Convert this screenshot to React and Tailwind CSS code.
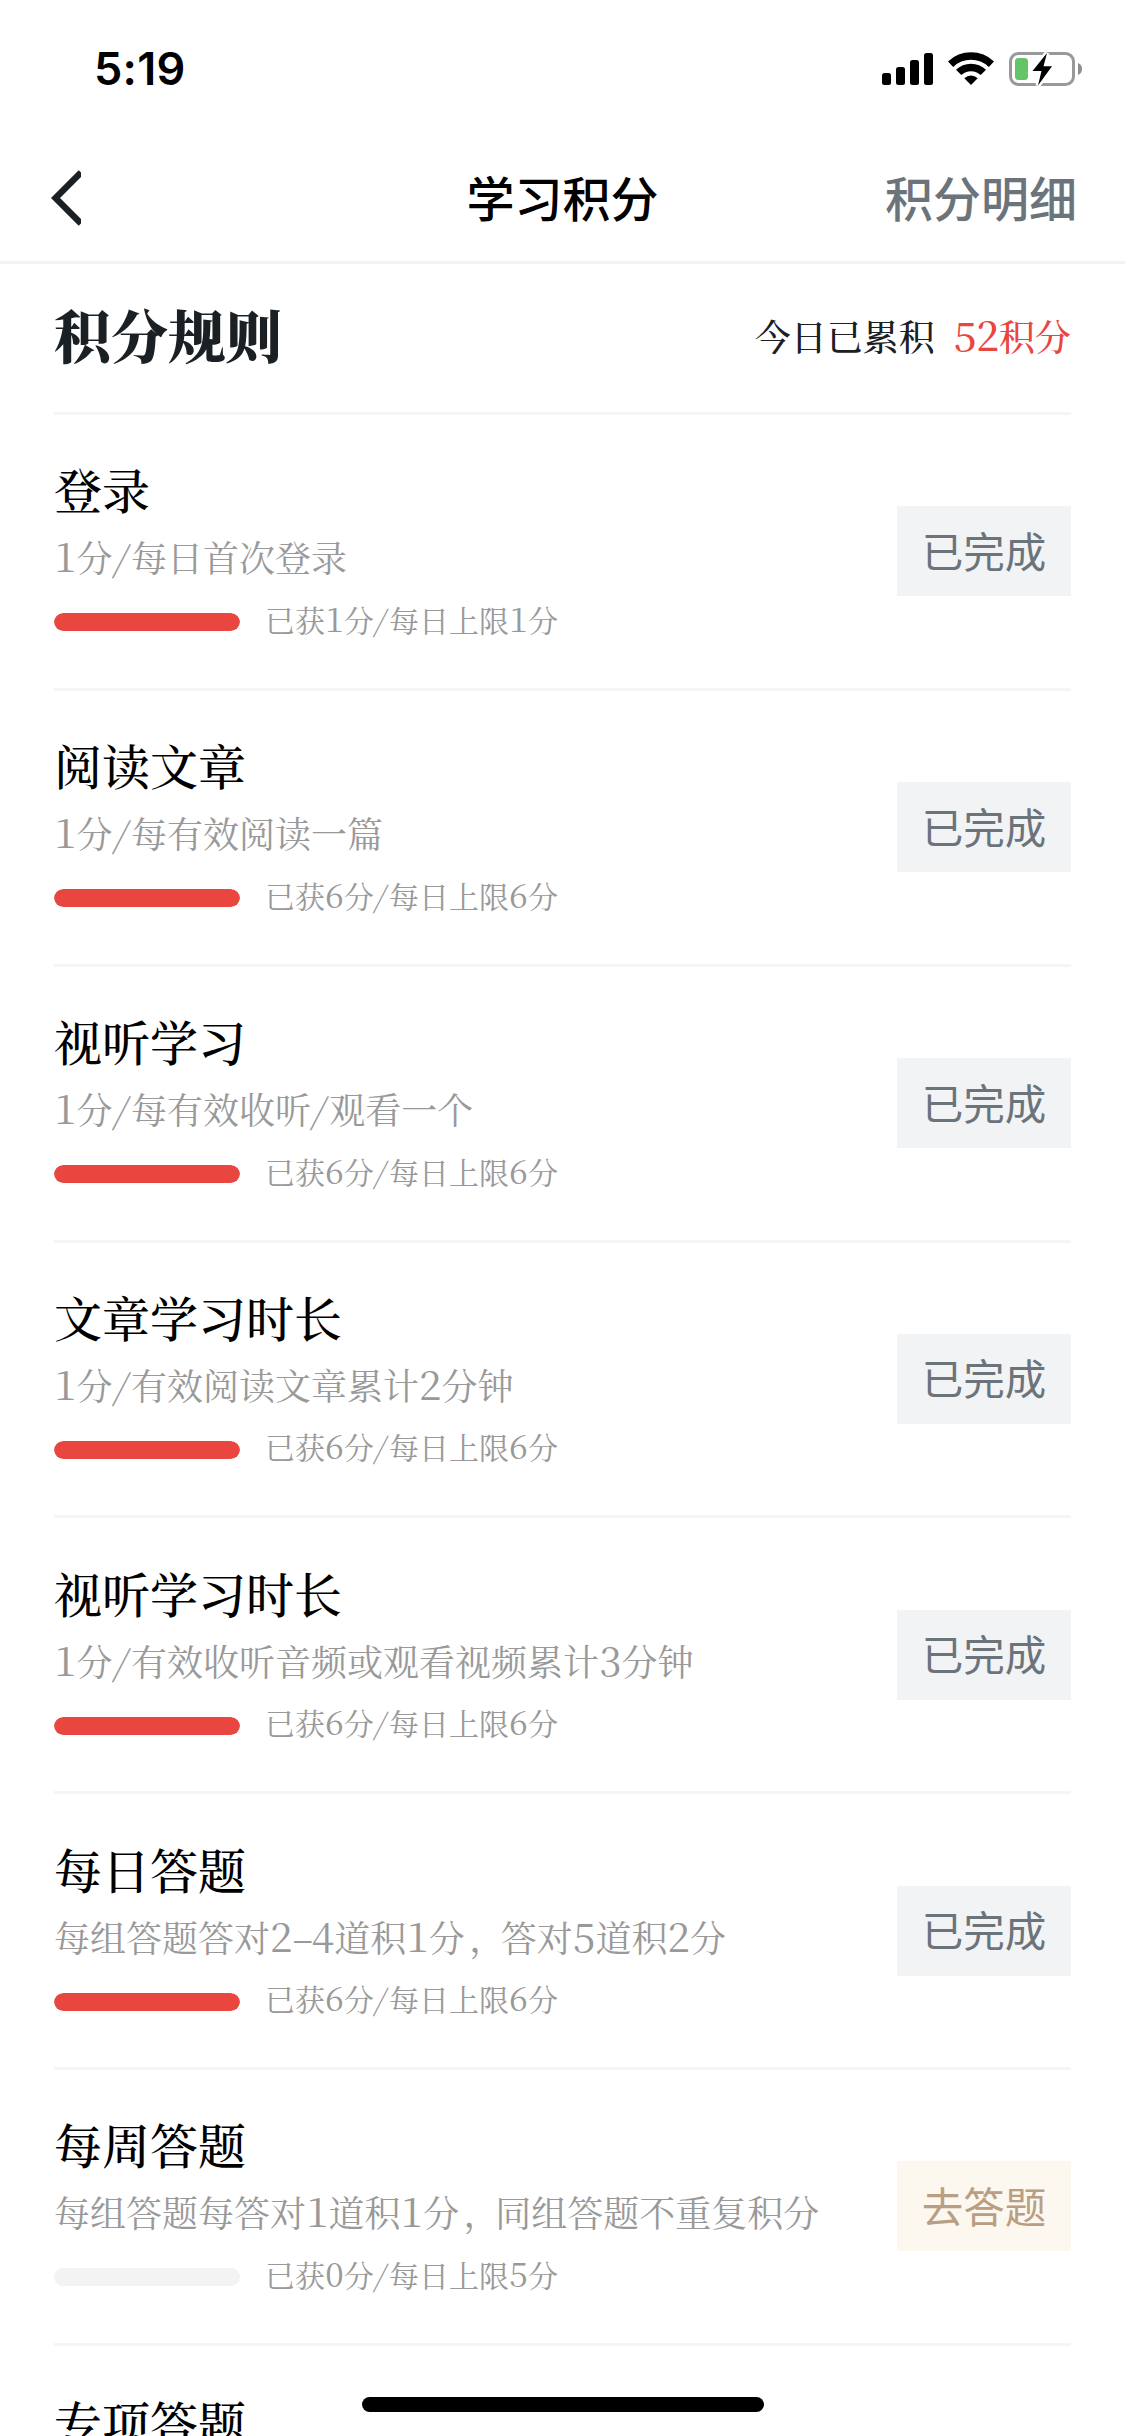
const rules = [
  { title: "登录", desc: "1分/每日首次登录", got: 1, limit: 1 },
  { title: "阅读文章", desc: "1分/每有效阅读一篇", got: 6, limit: 6 },
  { title: "视听学习", desc: "1分/每有效收听/观看一个", got: 6, limit: 6 },
  { title: "文章学习时长", desc: "1分/有效阅读文章累计2分钟", got: 6, limit: 6 },
  { title: "视听学习时长", desc: "1分/有效收听音频或观看视频累计3分钟", got: 6, limit: 6 },
  { title: "每日答题", desc: "每组答题答对2-4道积1分，答对5道积2分", got: 6, limit: 6 },
  { title: "每周答题", desc: "每组答题每答对1道积1分，同组答题不重复积分", got: 0, limit: 5, action: "去答题" },
];

// Latin characters sit in fixed-width cells, slightly larger than the Chinese text
const MixedText = ({ text }) =>
  text.split(/([0-9/，-])/).map((part, i) => {
    if (/^[0-9]$/.test(part)) {
      return (
        <span key={i} className="inline-block w-[0.56em] text-center text-[1.12em] leading-none">
          {part}
        </span>
      );
    }
    if (part === "/") {
      return (
        <span key={i} className="inline-block w-[0.51em] -skew-x-12 text-center leading-none">
          /
        </span>
      );
    }
    if (part === "-") {
      return (
        <span key={i} className="inline-block w-[0.53em] text-center leading-none font-medium">
          –
        </span>
      );
    }
    if (part === "，") {
      return (
        <span key={i} className="inline-block w-[1em] pl-[0.12em] leading-none whitespace-nowrap">
          ，
        </span>
      );
    }
    return part;
  });

const StatusBar = () => (
  <div className="flex h-[138px] shrink-0 items-start justify-between pl-[94px] pr-[43px]">
    <span className="mt-[42px] font-['Inter',sans-serif] text-[45px] leading-[54px] font-semibold tracking-[0.3px] text-black">
      5:19
    </span>
    <svg className="mt-[50px]" width="202" height="38" viewBox="880 50 202 38">
      <rect x="882" y="73" width="9" height="12" rx="2.5" />
      <rect x="896" y="67" width="9" height="18" rx="2.5" />
      <rect x="910" y="60" width="9" height="25" rx="2.5" />
      <rect x="924" y="53" width="9" height="32" rx="2.5" />

      {/* wifi */}
      <path d="M948 61.5a33 33 0 0 1 46 0l-5.2 5.4a25.500 25.500 0 0 0-35.600 0z" />
      <path d="M956 69.800a21.600 21.600 0 0 1 30 0l-5.300 5.300a14.200 14.200 0 0 0-19.400 0z" />
      <path d="M964.300 78.200a9.800 9.800 0 0 1 13.400 0L971 85z" />

      {/* battery */}
      <rect x="1010.500" y="53.500" width="63" height="31" rx="8" fill="none" stroke="#999" strokeWidth="3" />
      <path d="M1078 63a6.500 6.500 0 0 1 0 12z" fill="#8e8e8e" />
      <rect x="1015" y="58" width="13" height="22" rx="3.500" fill="#65c466" />
      <path
        d="M1047 53l-14.500 18h9l-3.500 14.500L1052 66.300h-8.500z"
        stroke="#fff"
        strokeWidth="5"
        paintOrder="stroke"
      />
    </svg>
  </div>
);

const NavBar = () => (
  <div className="grid h-[126px] shrink-0 grid-cols-3 items-center border-b-[3px] border-[#f2f3f3] px-[48px] font-['Noto_Sans_CJK_SC',sans-serif] text-[48px] leading-[60px]">
    <svg width="30" height="58" viewBox="0 0 30 58" className="mt-[-3px] ml-[3px]">
      <path d="M30 3.500L4.500 29L30 54.500" fill="none" stroke="#1b2024" strokeWidth="6.500" />
    </svg>
    <h1 className="mt-[-8px] text-center font-medium text-black">学习积分</h1>
    <span className="mt-[-8px] text-right font-medium text-[#6b737b]">积分明细</span>
  </div>
);

const RuleItem = ({ title, desc, got, limit, action }) => (
  <div className="flex h-[275.85px] shrink-0 items-center justify-between border-b-[3px] border-[#f4f5f6]">
    <div className="flex flex-col">
      <h3 className="mt-[-4px] text-[48px] leading-[72px] font-medium text-black">{title}</h3>
      <p className="mt-[2px] text-[36px] leading-[60px] text-[#999]">
        <MixedText text={desc} />
      </p>
      <div className="mt-[12px] flex h-[46px] items-center gap-[25px]">
        <div className="h-[18px] w-[186px] overflow-hidden rounded-full bg-[#f3f3f3]">
          <div className="h-full rounded-full bg-[#e9463f]" style={{ width: `${(got / limit) * 100}%` }} />
        </div>
        <span className="mt-[-7px] text-[30px] leading-[46px] text-[#999]">
          <MixedText text={`已获${got}分/每日上限${limit}分`} />
        </span>
      </div>
    </div>
    <button
      className={`h-[90px] w-[174px] pb-[3px] font-['Noto_Sans_CJK_SC',sans-serif] text-[41.5px] leading-[60px] ${
        action ? "bg-[#fdf8ef] text-[#b89f84]" : "bg-[#f1f3f5] text-[#6b737b]"
      }`}
    >
      {action || "已完成"}
    </button>
  </div>
);

export default function App() {
  return (
    <div className="relative flex h-[2436px] w-[1125px] flex-col overflow-hidden bg-white">
      <StatusBar />
      <NavBar />
      <main className="flex flex-col px-[54px] font-['Noto_Serif_CJK_SC','Source_Han_Serif_SC','Liberation_Serif','Noto_Sans_CJK_SC',serif]">
        <div className="flex h-[151px] shrink-0 items-center justify-between border-b-[3px] border-[#f4f5f6]">
          <h2 className="mt-[-11px] text-[57px] leading-[80px] font-black text-[#1b2024]">积分规则</h2>
          <p className="mt-[-4px] flex text-[36px] leading-[54px] font-medium text-[#1b2024]">
            今日已累积
            <span className="ml-[19px] text-[#e9463f]">
              <MixedText text="52积分" />
            </span>
          </p>
        </div>
        {rules.map((rule) => (
          <RuleItem key={rule.title} {...rule} />
        ))}
        <h3 className="mt-[40px] text-[48px] leading-[72px] font-medium text-black">专项答题</h3>
      </main>
      {/* home indicator */}
      <div className="absolute bottom-[24px] left-[362px] h-[15px] w-[402px] rounded-full bg-black" />
    </div>
  );
}
